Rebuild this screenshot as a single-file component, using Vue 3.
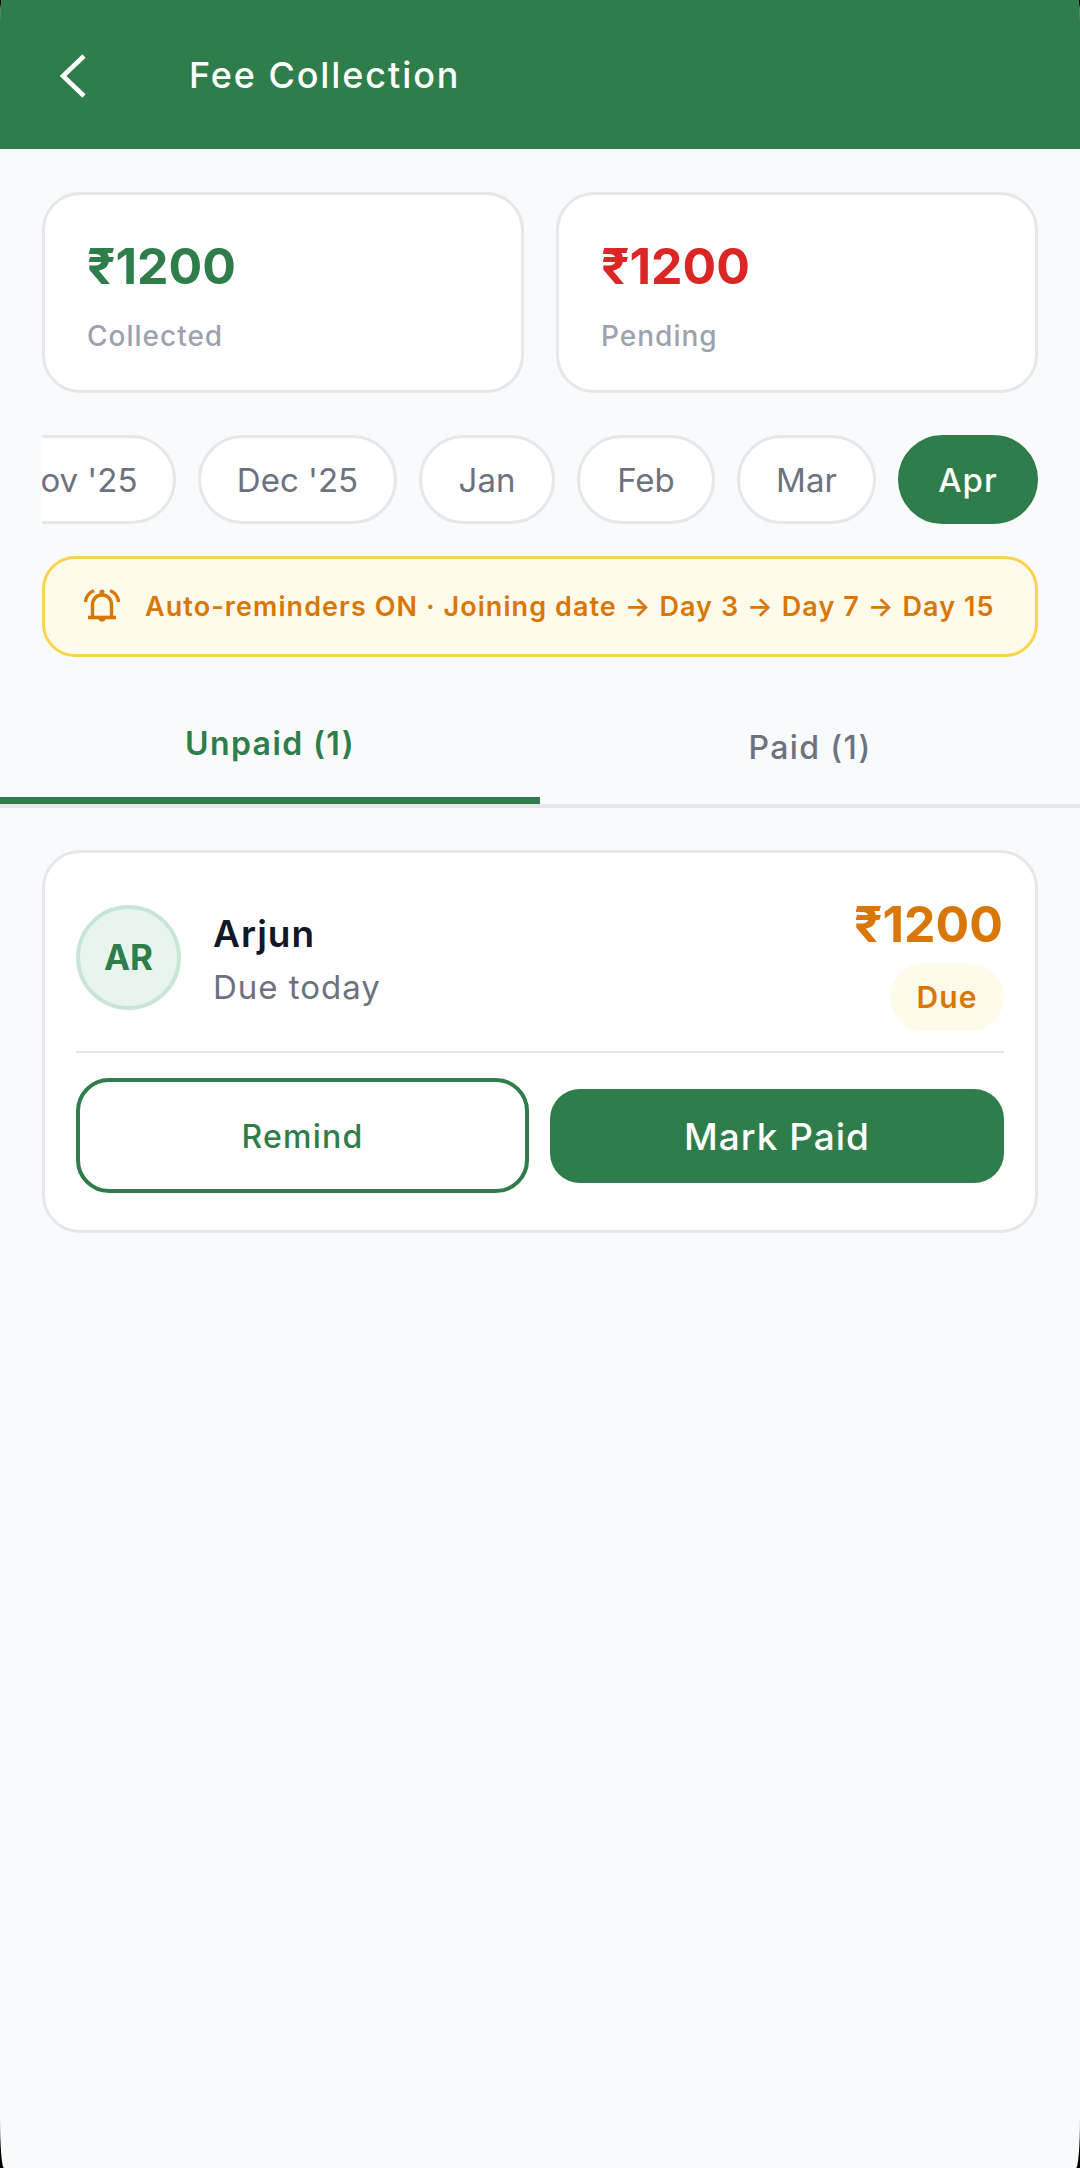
<script setup>
const chips = [
  { label: "Nov '25", w: 199 },
  { label: "Dec '25", w: 199 },
  { label: 'Jan', w: 136 },
  { label: 'Feb', w: 138 },
  { label: 'Mar', w: 139 },
  { label: 'Apr', w: 140, active: true },
]
</script>

<template>
  <div class="device">
    <div class="page">
      <header class="bar">
        <svg class="back" width="26" height="44" viewBox="0 0 26 44" fill="none">
          <path d="M24 2 L3 22 L24 42" stroke="#fff" stroke-width="4.6" />
        </svg>
        <h1 class="title">Fee Collection</h1>
      </header>

      <section class="stats">
        <div class="stat">
          <div class="amount green">₹1200</div>
          <div class="stat-label">Collected</div>
        </div>
        <div class="stat">
          <div class="amount red">₹1200</div>
          <div class="stat-label">Pending</div>
        </div>
      </section>

      <nav class="chips">
        <div
          v-for="c in chips"
          :key="c.label"
          class="chip"
          :class="{ active: c.active }"
          :style="{ width: c.w + 'px' }"
        >{{ c.label }}</div>
      </nav>

      <div class="banner">
        <svg class="bell" width="36" height="36" viewBox="0 0 36 36" fill="none" stroke="#D97706" stroke-width="3.4">
          <path d="M8.500 29V17C8.500 11 12.500 7 18 7S27.500 11 27.500 17V29" />
          <path d="M4 29.500H32" stroke-width="3.600" />
          <path d="M14.500 31h7c-.4 3.500-6.600 3.500-7 0Z" fill="#D97706" stroke="none" />
          <circle cx="18" cy="4" r="2.500" fill="#D97706" stroke="none" />
          <path d="M10 2.500C5 4.500 2 8.500 1.500 14M26 2.500C31 4.500 34 8.500 34.500 14" />
        </svg>
        <span class="banner-text">Auto-reminders ON · Joining date → Day 3 → Day 7 → Day 15</span>
      </div>

      <div class="tabs">
        <div class="tab on">Unpaid (1)</div>
        <div class="tab">Paid (1)</div>
      </div>

      <article class="card">
        <div class="row">
          <div class="avatar">AR</div>
          <div class="who">
            <div class="name">Arjun</div>
            <div class="sub">Due today</div>
          </div>
          <div class="right">
            <div class="amount orange">₹1200</div>
            <div class="badge">Due</div>
          </div>
        </div>
        <div class="actions">
          <button class="btn outline">Remind</button>
          <button class="btn solid">Mark Paid</button>
        </div>
      </article>
    </div>
  </div>
</template>

<style scoped>
.device {
  width: 1080px;
  height: 2168px;
  background: #000;
}
.page {
  width: 1080px;
  height: 2168px;
  background: #f9fafb;
  font-family: Inter, "Noto Sans", sans-serif;
  overflow: hidden;
  border-radius: 2px 2px 4px 4px / 26px 26px 50px 50px;
}
.bar {
  height: 149px;
  background: #2e7d4a;
  display: flex;
  align-items: center;
  padding-left: 60px;
}
.back { flex: none; margin-top: 2px; }
.title {
  margin: 0 0 0 103px;
  color: #fff;
  font-size: 36px;
  font-weight: 500;
  letter-spacing: 1.9px;
}
.stats {
  display: flex;
  gap: 32px;
  padding: 43px 42px 0 42px;
}
.stat {
  flex: 1;
  height: 201px;
  box-sizing: border-box;
  background: #fff;
  border: 3px solid #e5e7eb;
  border-radius: 38px;
  padding: 41px 0 0 42px;
}
.amount {
  font-size: 50px;
  font-weight: 700;
  line-height: 60px;
}
.green { color: #2e7d4a; }
.red { color: #dc2626; }
.orange { color: #d97706; margin-right: 1px; }
.stat-label {
  margin-top: 23px;
  color: #9ca3af;
  font-size: 28px;
  font-weight: 500;
  line-height: 34px;
  letter-spacing: 1px;
}
.chips {
  display: flex;
  justify-content: flex-end;
  gap: 22px;
  margin: 42px 42px 0 42px;
  overflow: hidden;
}
.chip {
  flex: none;
  height: 89px;
  box-sizing: border-box;
  display: flex;
  align-items: center;
  justify-content: center;
  background: #fff;
  border: 3px solid #e5e7eb;
  border-radius: 45px;
  color: #6b7280;
  font-size: 33px;
  white-space: nowrap;
}
.chip.active {
  background: #2e7d4a;
  border-color: #2e7d4a;
  color: #fff;
  font-weight: 500;
  letter-spacing: 1px;
}
.banner {
  display: flex;
  align-items: center;
  gap: 25px;
  height: 101px;
  box-sizing: border-box;
  margin: 32px 42px 0 42px;
  padding-left: 39px;
  background: #fffbeb;
  border: 3px solid #fcd34d;
  border-radius: 33px;
}
.bell { flex: none; margin-top: -2px; }
.banner-text {
  color: #d97706;
  font-size: 27px;
  font-weight: 600;
  letter-spacing: 1.07px;
  white-space: nowrap;
}
.tabs {
  display: flex;
  margin-top: 33px;
  height: 118px;
  box-sizing: border-box;
  border-bottom: 4px solid #e5e7eb;
}
.tab {
  flex: 1;
  display: flex;
  align-items: center;
  justify-content: center;
  color: #6b7280;
  font-size: 32px;
  font-weight: 500;
  letter-spacing: 1.4px;
}
.tab.on {
  color: #2e7d4a;
  font-weight: 600;
  border-bottom: 7px solid #2e7d4a;
}
.card {
  margin: 42px 42px 0 42px;
  box-sizing: border-box;
  background: #fff;
  border: 3px solid #e5e7eb;
  border-radius: 38px;
  padding: 0 31px 37px;
  display: flex;
  flex-direction: column;
}
.row {
  display: flex;
  align-items: center;
  height: 200px;
  padding-top: 10px;
  border-bottom: 2px solid #e5e7eb;
  flex: none;
  box-sizing: border-box;
}
.avatar {
  width: 105px;
  height: 105px;
  flex: none;
  box-sizing: border-box;
  display: flex;
  align-items: center;
  justify-content: center;
  border-radius: 50%;
  background: #e8f5ee;
  border: 4px solid #c8e6d4;
  color: #2e7d4a;
  font-size: 35px;
  font-weight: 700;
}
.who {
  flex: 1;
  margin: 5px 0 0 32px;
}
.name {
  color: #111827;
  font-size: 37px;
  font-weight: 600;
  line-height: 44px;
  letter-spacing: 1px;
}
.sub {
  margin-top: 10px;
  color: #6b7280;
  font-size: 33px;
  line-height: 42px;
  letter-spacing: 1px;
}
.right {
  display: flex;
  flex-direction: column;
  align-items: flex-end;
  margin-top: 11px;
}
.badge {
  margin-top: 9px;
  width: 114px;
  height: 68px;
  display: flex;
  align-items: center;
  justify-content: center;
  border-radius: 34px;
  background: #fffbeb;
  color: #d97706;
  font-size: 30px;
  font-weight: 600;
  letter-spacing: 1px;
}
.actions {
  display: flex;
  align-items: center;
  gap: 21px;
  margin-top: 25px;
}
.btn {
  font-family: inherit;
  box-sizing: border-box;
  display: flex;
  align-items: center;
  justify-content: center;
  padding: 2px 0 0;
}
.outline {
  width: 453px;
  height: 115px;
  background: #fff;
  border: 4px solid #2e7d4a;
  border-radius: 33px;
  color: #2e7d4a;
  font-size: 32px;
  font-weight: 500;
  letter-spacing: 1.2px;
}
.solid {
  flex: 1;
  height: 94px;
  border: 0;
  background: #2e7d4a;
  border-radius: 30px;
  color: #fff;
  font-size: 37px;
  font-weight: 500;
  letter-spacing: 1px;
}
</style>
